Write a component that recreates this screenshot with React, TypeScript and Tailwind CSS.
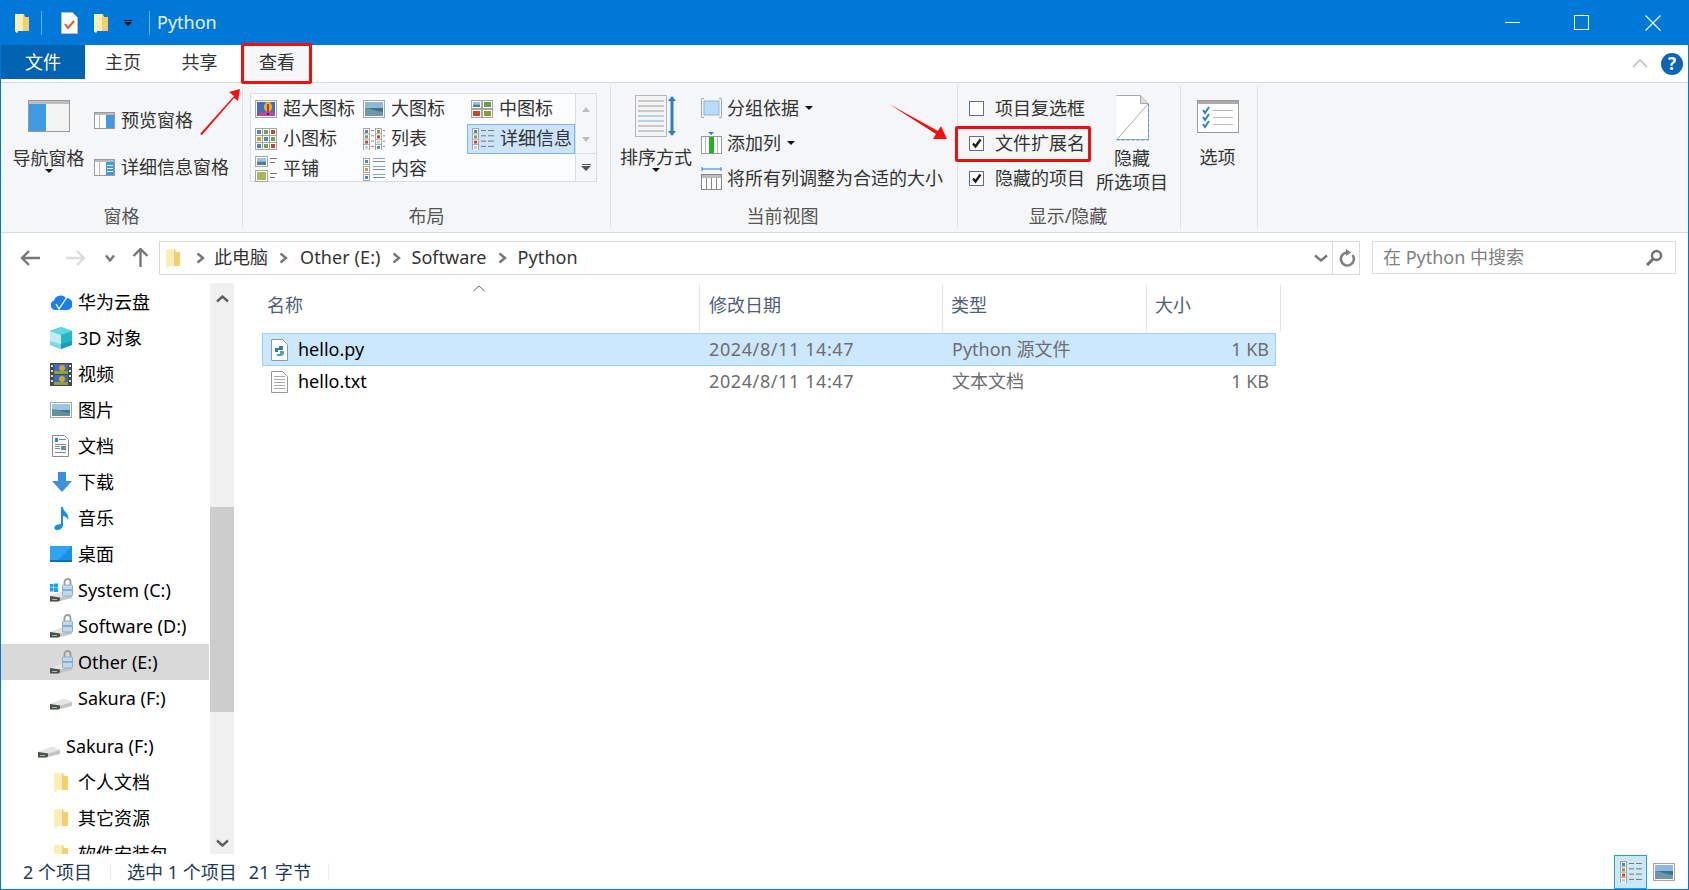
import type { ReactNode } from 'react';

const FONT = 'font-["Noto_Sans","Noto_Sans_CJK_SC",sans-serif]';

function Svg({ w, h, children, className = '' }: { w: number; h: number; children: ReactNode; className?: string }) {
    return (
        <svg width={w} height={h} viewBox={`0 0 ${w} ${h}`} className={`block shrink-0 ${className}`}>
            {children}
        </svg>
    );
}

function Folder() {
    return (
        <Svg w={14} h={20}>
            <path d="M0 1h9v3h5v14H3l-1 2-2-2z" fill="#f5d77f" />
            <path d="M7 1h2l1 3h4v14H5z" fill="#f3cf72" />
            <path d="M0 1h8v17H3l-1 2-2-2z" fill="#fdeeb5" />
        </Svg>
    );
}

function Caret({ className = '' }: { className?: string }) {
    return <span className={`block w-0 h-0 border-x-[4px] border-x-transparent border-t-[4px] border-t-[#111] ${className}`} />;
}

function Chevron({ size = 9, color = '#777', width = 2.4 }: { size?: number; color?: string; width?: number }) {
    return (
        <Svg w={size} h={size + 3}>
            <path d={`M1.5 1.5L${size - 2} ${(size + 3) / 2}L1.5 ${size + 1.5}`} fill="none" stroke={color} strokeWidth={width} />
        </Svg>
    );
}

function ChevronDown({ w = 12, color = '#777' }: { w?: number; color?: string }) {
    return (
        <Svg w={w} h={8}>
            <path d={`M1 1.5L${w / 2} 6.5L${w - 1} 1.5`} fill="none" stroke={color} strokeWidth={2.4} />
        </Svg>
    );
}

// little landscape thumbnail used by the layout gallery
function Photo({ x, y, w, h }: { x: number; y: number; w: number; h: number }) {
    return (
        <g>
            <rect x={x + 0.5} y={y + 0.5} width={w - 1} height={h - 1} fill="#fff" stroke="#a6a6a6" />
            <rect x={x + 2} y={y + 2} width={w - 4} height={(h - 4) / 2} fill="#9fc3e2" />
            <rect x={x + 2} y={y + h / 2} width={w - 4} height={h / 2 - 2} fill="#4d7f86" />
        </g>
    );
}

function Dot({ x, y, c }: { x: number; y: number; c: string }) {
    return (
        <g>
            <rect x={x + 0.5} y={y + 0.5} width={6} height={6} fill="#fff" stroke="#a6a6a6" />
            <rect x={x + 2} y={y + 2} width={3} height={3} fill={c} />
        </g>
    );
}

function GalleryIcon({ kind }: { kind: string }) {
    if (kind === 'xl') {
        return (
            <Svg w={22} h={18}>
                <rect x="0.5" y="0.5" width="21" height="17" fill="#fff" stroke="#a6a6a6" />
                <rect x="2" y="2" width="18" height="14" fill="#3f6cc0" />
                <path d="M2 16l3-5 3 2 3-2 5 1 4 1v3z" fill="#b54aa5" />
                <ellipse cx="13" cy="7" rx="4" ry="5" fill="#e9b320" />
                <rect x="12" y="4" width="2" height="8" fill="#c5321f" />
                <rect x="12" y="13" width="2" height="2" fill="#333" />
            </Svg>
        );
    }
    if (kind === 'l') {
        return (
            <Svg w={22} h={18}>
                <rect x="0.5" y="0.5" width="21" height="17" fill="#fff" stroke="#a6a6a6" />
                <rect x="2" y="2" width="18" height="6" fill="#8fb9dc" />
                <rect x="2" y="8" width="18" height="8" fill="#3d7480" />
                <path d="M2 8c6 0 9 3 18 4v4H2z" fill="#6f97a8" />
            </Svg>
        );
    }
    if (kind === 'm') {
        return (
            <Svg w={22} h={18}>
                <Photo x={0} y={0} w={11} h={9} />
                <rect x="11.5" y="0.5" width="10" height="8" fill="#fff" stroke="#a6a6a6" />
                <rect x="13" y="2" width="7" height="5" fill="#6f9a4e" />
                <rect x="0.5" y="9.5" width="10" height="8" fill="#fff" stroke="#a6a6a6" />
                <rect x="2" y="11" width="7" height="5" fill="#c9452c" />
                <rect x="11.5" y="9.5" width="10" height="8" fill="#fff" stroke="#a6a6a6" />
                <rect x="13" y="11" width="7" height="5" fill="#8a9b3f" />
            </Svg>
        );
    }
    if (kind === 's') {
        const cs = ['#4a86c8', '#7aa04a', '#c9452c', '#c9a02c', '#4a86c8', '#7aa04a', '#4a86c8', '#7aa04a', '#c9452c'];
        return (
            <Svg w={22} h={22}>
                <rect x="0.5" y="0.5" width="21" height="21" fill="#fff" stroke="#a6a6a6" />
                <path d="M7.500 0v22M14.500 0v22M0 7.500h22M0 14.500h22" stroke="#a6a6a6" />
                {cs.map((c, i) => (
                    <rect key={i} x={2 + (i % 3) * 7} y={2 + Math.floor(i / 3) * 7} width="4" height="4" fill={c} />
                ))}
            </Svg>
        );
    }
    if (kind === 'list') {
        const cs = ['#4a86c8', '#8a9b3f', '#c9452c', '#ccc'];
        return (
            <Svg w={22} h={22}>
                {cs.map((c, i) => (
                    <g key={i}>
                        <Dot x={0} y={i * 5.3} c={c} />
                        <rect x="8" y={i * 5.3 + 2} width="3" height="1" fill="#888" />
                        <Dot x={12} y={i * 5.3} c={cs[(i + 1) % 4]} />
                        <rect x="20" y={i * 5.3 + 2} width="2" height="1" fill="#888" />
                    </g>
                ))}
            </Svg>
        );
    }
    if (kind === 'detail') {
        const cs = ['#4a86c8', '#8a9b3f', '#c9452c', '#ccc'];
        return (
            <Svg w={22} h={22}>
                {cs.map((c, i) => (
                    <g key={i}>
                        <Dot x={0} y={i * 5.3} c={c} />
                        <rect x="9" y={i * 5.3 + 2} width="5" height="1" fill="#777" />
                        <rect x="16" y={i * 5.3 + 2} width="6" height="1" fill="#777" />
                    </g>
                ))}
            </Svg>
        );
    }
    if (kind === 'tile') {
        return (
            <Svg w={22} h={26}>
                <Photo x={0} y={0} w={13} h={11} />
                <rect x="15" y="2" width="7" height="1" fill="#777" />
                <rect x="15" y="6" width="5" height="1" fill="#777" />
                <rect x="0.5" y="14.5" width="12" height="11" fill="#fff" stroke="#a6a6a6" />
                <rect x="2" y="16" width="9" height="8" fill="#a9b65a" />
                <rect x="15" y="17" width="7" height="1" fill="#777" />
                <rect x="15" y="21" width="5" height="1" fill="#777" />
            </Svg>
        );
    }
    const cs = ['#4a86c8', '#c9a02c', '#4a86c8'];
    return (
        <Svg w={22} h={24}>
            {cs.map((c, i) => (
                <g key={i}>
                    <Dot x={0} y={1 + i * 8} c={c} />
                    <rect x="10" y={1 + i * 8} width="12" height="1" fill="#7ea6dc" />
                    <rect x="10" y={4 + i * 8} width="12" height="1" fill="#888" />
                </g>
            ))}
        </Svg>
    );
}

function Drive({ lock, win }: { lock?: boolean; win?: boolean }) {
    return (
        <Svg w={23} h={24}>
            <path d="M0 18l14-5 8 3v4l-14 3.500H0z" fill="#c4c4c4" />
            <path d="M0 18l10 1.500L22 16l-8-3z" fill="#e6e6e6" />
            <path d="M0 18l10 1.500v3L8 23.500H0z" fill="#4f4f4f" />
            <rect x="2" y="21" width="5" height="1" fill="#86d186" />
            {lock && (
                <g>
                    <path d="M14.500 7V4a3 3 0 0 1 6 0v3" fill="none" stroke="#9c9c9c" strokeWidth="1.8" />
                    <rect x="12.500" y="7" width="10" height="11" rx="1" fill="#c3d9ea" stroke="#8fafc6" />
                    <rect x="13" y="11" width="9" height="2" fill="#7fb0d6" />
                </g>
            )}
            {win && (
                <g fill="#12a5ef">
                    <rect x="0" y="6" width="3.500" height="3.500" />
                    <rect x="4" y="5.500" width="4" height="4" />
                    <rect x="0" y="10" width="3.500" height="3.500" />
                    <rect x="4" y="10" width="4" height="4" />
                </g>
            )}
        </Svg>
    );
}

function NavIcon({ kind }: { kind: string }) {
    if (kind === 'cloud') {
        return (
            <Svg w={22} h={16}>
                <path d="M5 16a5 5 0 0 1-1-9.600A7 7 0 0 1 16 4a5.500 5.500 0 0 1 1 12z" fill="#1b7ff0" />
                <path d="M6 10l3 5 8-12" fill="none" stroke="#fff" strokeWidth="1.3" />
            </Svg>
        );
    }
    if (kind === 'cube') {
        return (
            <Svg w={22} h={22}>
                <path d="M11 0l11 4v14l-11 4L0 18V4z" fill="#25b5c9" />
                <path d="M0 4l11 4 11-4-11-4z" fill="#5fd6e4" />
                <path d="M0 4l11 4v14L0 18z" fill="#c2ecf1" />
                <path d="M0 14l11 3v5L0 18z" fill="#7fd9e2" />
                <path d="M11 17l11-3v4l-11 4z" fill="#1ba0b3" />
            </Svg>
        );
    }
    if (kind === 'film') {
        return (
            <Svg w={22} h={23}>
                <rect width="22" height="23" fill="#4a4a4a" />
                <rect x="4" y="1" width="14" height="10" fill="#3a6cc4" />
                <rect x="4" y="12" width="14" height="10" fill="#3a6cc4" />
                <circle cx="12" cy="5" r="3" fill="#d9a320" />
                <circle cx="12" cy="16" r="3" fill="#d9a320" />
                <rect x="4" y="8" width="14" height="3" fill="#8aa53a" />
                <rect x="4" y="19" width="14" height="3" fill="#8aa53a" />
                {[2, 7, 12, 17].map(y => (
                    <g key={y} fill="#ddd">
                        <rect x="1" y={y} width="2" height="2" />
                        <rect x="19" y={y} width="2" height="2" />
                    </g>
                ))}
            </Svg>
        );
    }
    if (kind === 'pic') {
        return (
            <Svg w={22} h={16}>
                <rect x="0.5" y="0.5" width="21" height="15" fill="#fff" stroke="#a6a6a6" />
                <rect x="2" y="2" width="18" height="6" fill="#9cc4e4" />
                <rect x="2" y="8" width="18" height="6" fill="#3f7a84" />
                <path d="M2 7c6 0 10 3 18 4v3H2z" fill="#5f919b" />
            </Svg>
        );
    }
    if (kind === 'doc') {
        return (
            <Svg w={17} h={22}>
                <path d="M.5.5h12l4 4v17H.5z" fill="#fff" stroke="#8a8a8a" />
                <rect x="3" y="3" width="3" height="4" fill="#2f7fd0" />
                <rect x="7" y="4" width="7" height="1" fill="#4a90d9" />
                <rect x="3" y="9" width="11" height="1" fill="#888" />
                <rect x="3" y="11" width="5" height="1" fill="#888" />
                <rect x="9" y="11" width="5" height="4" fill="#5b93a5" />
                <rect x="3" y="13" width="5" height="1" fill="#888" />
                <rect x="3" y="17" width="11" height="1" fill="#888" />
            </Svg>
        );
    }
    if (kind === 'down') {
        return (
            <Svg w={20} h={20}>
                <path d="M6 0h8v9h6l-10 11L0 9h6z" fill="#3d8fe0" />
            </Svg>
        );
    }
    if (kind === 'music') {
        return (
            <Svg w={17} h={23}>
                <path d="M7 0h2c0 5 7 6 5 13-1-3-3-4-5-4v9c0 3-3 5-6 5s-3-3-2-4 3-2 6-2z" fill="#1592e6" />
            </Svg>
        );
    }
    return (
        <Svg w={22} h={16}>
            <rect width="22" height="16" fill="#1a8fe8" />
            <path d="M0 0h22L8 14H0z" fill="#2ea5f2" />
            <rect y="14" width="22" height="2" fill="#0c6fc0" />
        </Svg>
    );
}

function NavRow({ icon, label, active, indent = 'pl-[49px]' }: { icon: ReactNode; label: string; active?: boolean; indent?: string }) {
    return (
        <div className={`h-9 flex items-center ${indent} text-black ${active ? 'bg-[#d9d9d9]' : ''}`}>
            <span className="w-[28px] flex justify-start shrink-0">{icon}</span>
            <span className="whitespace-nowrap">{label}</span>
        </div>
    );
}

function Gallery({ icon, label, selected }: { icon: string; label: string; selected?: boolean }) {
    return (
        <div className={`h-[30px] flex items-center pl-[4px] text-[#333] whitespace-nowrap ${selected ? 'bg-[#cce4fb] border border-[#7fb4ea] pl-[3px]' : ''}`}>
            <span className="w-[28px] shrink-0">
                <GalleryIcon kind={icon} />
            </span>
            <span className="pb-[2px]">{label}</span>
        </div>
    );
}

function Check({ checked }: { checked?: boolean }) {
    return (
        <span className="w-[15px] h-[15px] border border-[#5b6f86] bg-white flex items-center justify-center shrink-0">
            {checked && (
                <Svg w={11} h={11}>
                    <path d="M2 5.500l2.500 3L9.500 1.500" fill="none" stroke="#1c1c1c" strokeWidth="2.400" />
                </Svg>
            )}
        </span>
    );
}

function GroupLabel({ children }: { children: ReactNode }) {
    return <div className="h-[30px] pt-[4px] flex items-center justify-center text-[#555] text-[18px]">{children}</div>;
}

function Row({ name, icon, type, selected }: { name: string; icon: ReactNode; type: string; selected?: boolean }) {
    return (
        <div className={`w-[1014px] grid grid-cols-[438px_243px_204px_127px] items-center border ${selected ? 'h-[33px] bg-[#cce8ff] border-[#99d1ff]' : 'h-[31px] border-transparent'}`}>
            <div className="flex items-center pl-[8px] text-black">
                <span className="w-[27px] shrink-0">{icon}</span>
                <span className="pb-[2px]">{name}</span>
            </div>
            <div className="pl-[8px] pb-[2px] text-[#6d6d6d] tracking-[0.6px]">2024/8/11 14:47</div>
            <div className="pl-[8px] pb-[2px] text-[#6d6d6d]">{type}</div>
            <div className="text-right pr-[6px] pb-[2px] text-[#6d6d6d]">1 KB</div>
        </div>
    );
}

export default function App() {
    return (
        <div className={`relative w-[1689px] h-[890px] overflow-hidden bg-white flex flex-col border-x border-b border-[#0078d7] text-[18px] leading-none ${FONT}`}>
            {/* Title bar */}
            <div className="h-[45px] bg-[#0078d7] flex items-center text-white shrink-0 -mx-px px-px">
                <span className="ml-[14px]"><Folder /></span>
                <span className="ml-[12px] w-px h-[24px] bg-[#6db0e8]" />
                <span className="ml-[19px]">
                    <Svg w={17} h={22}>
                        <path d="M.5.5h11l5 5v16H.5z" fill="#fff" stroke="#bbb" />
                        <path d="M4 12l3 4 6-7" fill="none" stroke="#e8562a" strokeWidth="2" />
                    </Svg>
                </span>
                <span className="ml-[16px]"><Folder /></span>
                <span className="ml-[16px] flex flex-col items-center gap-[1px]">
                    <span className="w-[8px] h-px bg-black" />
                    <Caret />
                </span>
                <span className="ml-[17px] w-px h-[24px] bg-[#6db0e8]" />
                <span className="ml-[7px] pb-[2px] text-[18px] text-[#e8f2fb]">Python</span>
                <div className="ml-auto flex items-center">
                    <button className="w-[69px] h-[45px] flex items-center justify-center">
                        <span className="w-[15px] h-px bg-white" />
                    </button>
                    <button className="w-[71px] h-[45px] pr-[2px] flex items-center justify-center">
                        <span className="w-[15px] h-[15px] border border-white" />
                    </button>
                    <button className="w-[70px] h-[45px] flex items-center justify-center">
                        <Svg w={16} h={16}>
                            <path d="M.5.5l15 15M15.500.5l-15 15" stroke="#fff" strokeWidth="1.1" />
                        </Svg>
                    </button>
                </div>
            </div>

            {/* Tabs */}
            <div className="h-[38px] flex items-start border-b border-[#dadbdc] shrink-0 text-[#333]">
                <div className="w-[84px] h-[34px] bg-[#0063b1] text-white flex items-center justify-center">文件</div>
                <div className="w-[76px] h-[34px] flex items-center justify-center">主页</div>
                <div className="w-[77px] h-[34px] flex items-center justify-center">共享</div>
                <div className="ml-[6px] w-[66px] h-[37px] bg-[#f5f6f7] flex items-center justify-center pb-[3px]">查看</div>
                <div className="ml-auto flex items-center h-[37px] pr-[5px] gap-[13px]">
                    <Svg w={16} h={9}>
                        <path d="M1 8l7-7 7 7" fill="none" stroke="#b5b5b5" strokeWidth="1.4" />
                    </Svg>
                    <span className="w-[22px] h-[22px] rounded-full bg-[#0a64b8] text-white text-[17px] font-bold flex items-center justify-center">?</span>
                </div>
            </div>

            {/* Ribbon */}
            <div className="h-[150px] bg-[#f5f6f7] border-b border-[#dadbdc] flex shrink-0 text-[#333]">
                {/* 窗格 */}
                <div className="w-[242px] border-r border-[#e1e2e3] my-[3px] flex flex-col">
                    <div className="h-[115px] flex">
                        <div className="w-[95px] -mr-[2px] flex flex-col items-center pt-[14px]">
                            <Svg w={42} h={32}>
                                <rect x="0.5" y="0.5" width="41" height="31" fill="#fff" stroke="#9a9a9a" />
                                <rect x="1" y="1" width="40" height="3" fill="#bdbdbd" />
                                <rect x="1" y="4" width="17" height="27" fill="#3f9ae2" />
                                <rect x="18" y="4" width="23" height="27" fill="#f3f3f3" />
                            </Svg>
                            <span className="mt-[17px] whitespace-nowrap">导航窗格</span>
                            <Caret className="mt-[2px]" />
                        </div>
                        <div className="flex flex-col pt-[22px] gap-[23px]">
                            <div className="h-[24px] flex items-center whitespace-nowrap">
                                <span className="w-[27px]">
                                    <Svg w={21} h={17}>
                                        <rect x="0.5" y="0.5" width="20" height="16" fill="#fff" stroke="#999" />
                                        <rect x="1" y="1" width="19" height="2" fill="#bbb" />
                                        <rect x="12" y="3" width="8" height="13" fill="#3f9ae2" />
                                        <rect x="5" y="3" width="1" height="13" fill="#bbb" />
                                    </Svg>
                                </span>
                                预览窗格
                            </div>
                            <div className="h-[24px] flex items-center whitespace-nowrap">
                                <span className="w-[27px]">
                                    <Svg w={21} h={17}>
                                        <rect x="0.5" y="0.5" width="20" height="16" fill="#fff" stroke="#999" />
                                        <rect x="1" y="1" width="19" height="2" fill="#bbb" />
                                        <rect x="12" y="3" width="8" height="13" fill="#3f9ae2" />
                                        <rect x="13" y="6" width="6" height="1" fill="#fff" />
                                        <rect x="13" y="9" width="6" height="1" fill="#fff" />
                                        <rect x="13" y="12" width="6" height="1" fill="#fff" />
                                        <rect x="5" y="3" width="1" height="13" fill="#bbb" />
                                    </Svg>
                                </span>
                                详细信息窗格
                            </div>
                        </div>
                    </div>
                    <GroupLabel>窗格</GroupLabel>
                </div>

                {/* 布局 */}
                <div className="w-[368px] border-r border-[#e1e2e3] my-[3px] flex flex-col">
                    <div className="h-[115px] pt-[7px] pl-[7px] flex">
                        <div className="w-[326px] h-[89px] bg-[#fbfcfe] border border-[#dcdde0] grid grid-cols-[108px_108px_108px] content-start">
                            <Gallery icon="xl" label="超大图标" />
                            <Gallery icon="l" label="大图标" />
                            <Gallery icon="m" label="中图标" />
                            <Gallery icon="s" label="小图标" />
                            <Gallery icon="list" label="列表" />
                            <Gallery icon="detail" label="详细信息" selected />
                            <Gallery icon="tile" label="平铺" />
                            <Gallery icon="content" label="内容" />
                        </div>
                        <div className="w-[21px] h-[89px] border border-l-0 border-[#dcdde0] flex flex-col items-center">
                            <span className="h-[30px] flex items-center">
                                <span className="block w-0 h-0 border-x-[4px] border-x-transparent border-b-[5px] border-b-[#bdbdbd]" />
                            </span>
                            <span className="h-[30px] flex items-center">
                                <span className="block w-0 h-0 border-x-[4px] border-x-transparent border-t-[5px] border-t-[#bdbdbd]" />
                            </span>
                            <span className="h-[28px] flex flex-col items-center justify-center gap-[1px] w-full border-t border-[#dcdde0] -mt-px">
                                <span className="w-[9px] h-px bg-[#555]" />
                                <span className="block w-0 h-0 border-x-[5px] border-x-transparent border-t-[5px] border-t-[#555]" />
                            </span>
                        </div>
                    </div>
                    <GroupLabel>布局</GroupLabel>
                </div>

                {/* 当前视图 */}
                <div className="w-[347px] border-r border-[#e1e2e3] my-[3px] flex flex-col">
                    <div className="h-[115px] flex">
                        <div className="w-[90px] flex flex-col items-center pt-[9px]">
                            <Svg w={42} h={44}>
                                <rect x="0.5" y="0.5" width="31" height="41" fill="#f4f4f4" stroke="#b5b5b5" />
                                {[5, 10, 15, 20, 25, 30, 35].map(y => (
                                    <rect key={y} x="3" y={y} width="26" height="2" fill={y === 20 || y === 25 ? '#b7d3e6' : '#c9c9c9'} />
                                ))}
                                <path d="M37 1l4 5h-2.500v30H41l-4 5-4-5h2.500V6H33z" fill="#2f7fc8" />
                            </Svg>
                            <span className="mt-[9px] whitespace-nowrap">排序方式</span>
                            <Caret className="mt-[2px]" />
                        </div>
                        <div className="flex flex-col pt-[11px] gap-[11px] -mt-[1px]">
                            <div className="h-[24px] flex items-center whitespace-nowrap">
                                <span className="w-[26px]">
                                    <Svg w={21} h={20}>
                                        <path d="M3 .5H.5v19H3M18 .5h2.500v19H18" fill="none" stroke="#aaa" />
                                        <rect x="3" y="3" width="15" height="14" fill="#b9dcf8" stroke="#8fb8d8" />
                                    </Svg>
                                </span>
                                分组依据
                                <Caret className="ml-[6px]" />
                            </div>
                            <div className="h-[24px] flex items-center whitespace-nowrap">
                                <span className="w-[26px]">
                                    <Svg w={21} h={22}>
                                        <path d="M7 0h6l-3 3z" fill="#2f7fc8" />
                                        <rect x="0.5" y="4.500" width="20" height="17" fill="#fff" stroke="#999" />
                                        <rect x="8" y="5" width="5" height="16" fill="#21b521" />
                                        <rect x="4" y="5" width="1" height="16" fill="#bbb" />
                                        <rect x="16" y="5" width="1" height="16" fill="#bbb" />
                                    </Svg>
                                </span>
                                添加列
                                <Caret className="ml-[6px]" />
                            </div>
                            <div className="h-[24px] flex items-center whitespace-nowrap">
                                <span className="w-[26px]">
                                    <Svg w={21} h={24}>
                                        <path d="M1 3h19M1 1v4M20 1v4" stroke="#2f7fc8" fill="none" />
                                        <rect x="0.5" y="8.500" width="20" height="15" fill="#fff" stroke="#888" />
                                        <rect x="1" y="9" width="19" height="3" fill="#bbb" />
                                        <path d="M5.500 12v11M10.500 12v11M15.500 12v11" stroke="#888" />
                                    </Svg>
                                </span>
                                将所有列调整为合适的大小
                            </div>
                        </div>
                    </div>
                    <div className="pr-[3px]"><GroupLabel>当前视图</GroupLabel></div>
                </div>

                {/* 显示/隐藏 */}
                <div className="w-[223px] border-r border-[#e1e2e3] my-[3px] flex flex-col">
                    <div className="h-[115px] flex">
                        <div className="flex flex-col pl-[11px] pt-[10px] gap-[11px] w-[142px]">
                            {[
                                { label: '项目复选框', on: false },
                                { label: '文件扩展名', on: true },
                                { label: '隐藏的项目', on: true },
                            ].map(item => (
                                <div key={item.label} className="h-[24px] flex items-center gap-[11px] whitespace-nowrap">
                                    <Check checked={item.on} />
                                    {item.label}
                                </div>
                            ))}
                        </div>
                        <div className="w-[72px] -ml-[4px] flex flex-col items-center pt-[9px]">
                            <Svg w={33} h={46}>
                                <path d="M.5.5h24l8 8v36H.5" fill="#fff" stroke="#aaa" />
                                <path d="M24.500.5v8h8" fill="#ddd" stroke="#aaa" />
                                <path d="M.5 45L32 9" stroke="#aaa" fill="none" />
                                <path d="M32.500 9v36H1" fill="none" stroke="#4a9ae0" strokeDasharray="3 2" />
                            </Svg>
                            <span className="mt-[8px] whitespace-nowrap">隐藏</span>
                            <span className="mt-[6px] whitespace-nowrap">所选项目</span>
                        </div>
                    </div>
                    <div className="pr-[2px]"><GroupLabel>显示/隐藏</GroupLabel></div>
                </div>

                {/* 选项 */}
                <div className="w-[77px] pr-[3px] border-r border-[#e1e2e3] my-[3px] flex flex-col items-center pt-[14px]">
                    <Svg w={42} h={33}>
                        <rect x="0.5" y="0.5" width="41" height="32" fill="#fff" stroke="#999" />
                        <rect x="1" y="1" width="40" height="3" fill="#aaa" />
                        {[8, 15, 22].map(y => (
                            <g key={y}>
                                <path d={`M6 ${y + 2}l2 3 4-6`} fill="none" stroke="#2f7fc8" strokeWidth="2" />
                                <rect x="16" y={y + 2} width="20" height="1" fill="#bbb" />
                            </g>
                        ))}
                    </Svg>
                    <span className="mt-[15px]">选项</span>
                </div>
            </div>

            {/* Address row */}
            <div className="h-[50px] flex items-start pt-[8px] shrink-0 text-[#333]">
                <div className="w-[158px] h-[33px] flex items-center shrink-0">
                    <span className="ml-[19px]">
                        <Svg w={20} h={16}>
                            <path d="M9 1L2 8l7 7M2 8h18" fill="none" stroke="#777" strokeWidth="2.400" />
                        </Svg>
                    </span>
                    <span className="ml-[26px]">
                        <Svg w={20} h={16}>
                            <path d="M11 1l7 7-7 7M18 8H0" fill="none" stroke="#dcdcdc" strokeWidth="2.400" />
                        </Svg>
                    </span>
                    <span className="ml-[19px]"><ChevronDown w={10} /></span>
                    <span className="ml-[17px]">
                        <Svg w={17} h={19}>
                            <path d="M8.500 1v18M1.500 8l7-7 7 7" fill="none" stroke="#777" strokeWidth="2.400" />
                        </Svg>
                    </span>
                </div>
                <div className="w-[1201px] h-[34px] border border-[#d9d9d9] flex items-center shrink-0">
                    <span className="ml-[6px]"><Folder /></span>
                    <span className="ml-[16px]"><Chevron /></span>
                    <span className="ml-[9px] pb-[2px]">此电脑</span>
                    <span className="ml-[11px]"><Chevron /></span>
                    <span className="ml-[12px] pb-[2px] tracking-[0.1px]">Other (E:)</span>
                    <span className="ml-[11px]"><Chevron /></span>
                    <span className="ml-[11px] pb-[2px]">Software</span>
                    <span className="ml-[11px]"><Chevron /></span>
                    <span className="ml-[11px] pb-[2px] tracking-[0.1px]">Python</span>
                    <span className="ml-auto w-[26px] pr-[4px] flex justify-end"><ChevronDown w={14} /></span>
                    <span className="w-[27px] h-full pl-[2px] border-l border-[#d9d9d9] flex items-center justify-center">
                        <Svg w={17} h={18}>
                            <path d="M13.500 6a6.500 6.500 0 1 1-5-2.500" fill="none" stroke="#808080" strokeWidth="2.600" />
                            <path d="M7 0l5 3.500L7 7z" fill="#808080" />
                        </Svg>
                    </span>
                </div>
                <div className="ml-[12px] w-[304px] h-[33px] border border-[#d9d9d9] flex items-center pl-[10px] pr-[12px] text-[#808080] shrink-0">
                    <span className="pb-[2px]">在 Python 中搜索</span>
                    <span className="ml-auto">
                        <Svg w={17} h={17}>
                            <circle cx="10.500" cy="6.500" r="4.500" fill="none" stroke="#707070" strokeWidth="2.400" />
                            <path d="M7 10l-6 6" stroke="#707070" strokeWidth="3" />
                        </Svg>
                    </span>
                </div>
            </div>

            {/* Body */}
            <div className="flex-1 min-h-0 flex">
                <div className="w-[208px] pt-[1px] overflow-hidden shrink-0">
                    <NavRow icon={<NavIcon kind="cloud" />} label="华为云盘" />
                    <NavRow icon={<NavIcon kind="cube" />} label="3D 对象" />
                    <NavRow icon={<NavIcon kind="film" />} label="视频" />
                    <NavRow icon={<NavIcon kind="pic" />} label="图片" />
                    <NavRow icon={<span className="block ml-[2px]"><NavIcon kind="doc" /></span>} label="文档" />
                    <NavRow icon={<span className="block ml-[2px]"><NavIcon kind="down" /></span>} label="下载" />
                    <NavRow icon={<span className="block ml-[4px]"><NavIcon kind="music" /></span>} label="音乐" />
                    <NavRow icon={<NavIcon kind="desktop" />} label="桌面" />
                    <NavRow icon={<Drive lock win />} label="System (C:)" />
                    <NavRow icon={<Drive lock />} label="Software (D:)" />
                    <NavRow icon={<Drive lock />} label="Other (E:)" active />
                    <NavRow icon={<Drive />} label="Sakura (F:)" />
                    <div className="h-[12px]" />
                    <NavRow icon={<Drive />} label="Sakura (F:)" indent="pl-[37px]" />
                    <NavRow icon={<span className="block ml-[4px]"><Folder /></span>} label="个人文档" />
                    <NavRow icon={<span className="block ml-[4px]"><Folder /></span>} label="其它资源" />
                    <NavRow icon={<span className="block ml-[4px]"><Folder /></span>} label="软件安装包" />
                </div>
                <div className="ml-[1px] w-[24px] bg-[#f0f0f0] flex flex-col items-center shrink-0">
                    <span className="h-[224px] w-full flex justify-center pt-[12px]">
                        <span className="rotate-180 h-fit"><ChevronDown w={13} color="#606060" /></span>
                    </span>
                    <span className="h-[205px] w-full bg-[#cdcdcd]" />
                    <span className="flex-1 flex items-end pb-[7px]"><ChevronDown w={13} color="#606060" /></span>
                </div>
                <div className="ml-[28px] flex-1 min-w-0 relative">
                    <div className="grid grid-cols-[438px_243px_204px_134px] h-[50px] text-[#4c607a]">
                        <div className="relative border-r border-[#e5e5e5] flex items-center pl-[5px] pb-[6px] my-[1px]">
                            名称
                            <span className="absolute left-[211px] top-[1px]">
                                <Svg w={12} h={7}>
                                    <path d="M.5 6L6 1l5.500 5" fill="none" stroke="#666" />
                                </Svg>
                            </span>
                        </div>
                        <div className="border-r border-[#e5e5e5] flex items-center pl-[9px] pb-[6px] my-[1px]">修改日期</div>
                        <div className="border-r border-[#e5e5e5] flex items-center pl-[8px] pb-[6px] my-[1px]">类型</div>
                        <div className="border-r border-[#e5e5e5] flex items-center pl-[8px] pb-[6px] my-[1px]">大小</div>
                    </div>
                    <Row
                        name="hello.py"
                        type="Python 源文件"
                        selected
                        icon={
                            <Svg w={17} h={22}>
                                <path d="M.5.5h11l5 5v16H.5z" fill="#fff" stroke="#8a9aa8" />
                                <path d="M4 9h4V7h4v4H7v2H4z" fill="#2f7f9f" />
                                <path d="M13 12H9v3H6v2h5l2-2z" fill="#5a9fb8" />
                            </Svg>
                        }
                    />
                    <Row
                        name="hello.txt"
                        type="文本文档"
                        icon={
                            <Svg w={17} h={22}>
                                <path d="M.5.5h11l5 5v16H.5z" fill="#fff" stroke="#999" />
                                {[5, 8, 11, 14, 17].map(y => (
                                    <rect key={y} x="3" y={y} width="11" height="1" fill="#aaa" />
                                ))}
                            </Svg>
                        }
                    />
                </div>
            </div>

            {/* Status bar */}
            <div className="h-[35px] flex items-center shrink-0 text-[#1e395b] pl-[22px]">
                <span className="w-[87px] whitespace-nowrap">2 个项目</span>
                <span className="w-px h-[18px] bg-[#eeeeee]" />
                <span className="ml-[16px] w-[201px] flex gap-[12px] whitespace-nowrap">
                    <span>选中 1 个项目</span>
                    <span className="tracking-[0.3px]">21 字节</span>
                </span>
                <span className="w-px h-[18px] bg-[#eeeeee]" />
                <div className="ml-auto flex items-center h-full">
                    <span className="w-[33px] h-[34px] bg-[#cbe8f6] border border-[#26a0da] flex items-center justify-center">
                        <GalleryIcon kind="detail" />
                    </span>
                    <span className="ml-[6px] mr-[13px]">
                        <GalleryIcon kind="l" />
                    </span>
                </div>
            </div>

            {/* Screenshot annotations */}
            <div className="absolute left-[240px] top-[43px] w-[71px] h-[41px] border-[3px] border-[#f00f0f] rounded-[2px]" />
            <div className="absolute left-[954px] top-[126px] w-[136px] h-[36px] border-[3px] border-[#f00f0f] rounded-[2px]" />
            <svg className="absolute left-0 top-0 pointer-events-none" width="1689" height="890">
                <path d="M199 134L233 96L228 92L239 89L237 101L233 98L201 135Z" fill="#f51010" />
                <path d="M888 104L937 131L940 126L946 139L932 139L935 134Z" fill="#f51010" />
            </svg>
        </div>
    );
}
